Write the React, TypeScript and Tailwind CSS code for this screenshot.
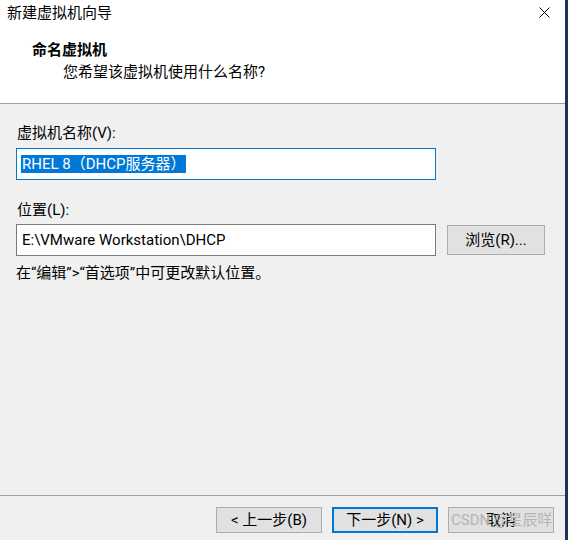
const font = "font-['Roboto','Noto_Sans_CJK_SC',sans-serif]";

const Button = ({ label, primary }: { label: string; primary?: boolean }) => (
  <div
    className={`h-[26px] w-[106px] flex items-center justify-center bg-[#e1e1e1] text-[15px] leading-none text-black ${
      primary ? "border-2 border-[#0078d7]" : "border border-[#adadad]"
    }`}
  >
    {label}
  </div>
);

const App = () => {
  return (
    <div className={`w-[568px] h-[540px] flex bg-[#f0f0f0] text-black ${font}`}>
      <div className="flex-1 flex flex-col">
        {/* title + header */}
        <div className="h-[104px] bg-white border-b border-[#a0a0a0]">
          <div className="h-[28px] flex items-start justify-between pl-[7px] pr-[15px]">
            <span className="text-[15px] leading-[20px] mt-[3px]">新建虚拟机向导</span>
            <svg width="11" height="11" viewBox="0 0 11 11" className="mt-[7px]">
              <path d="M0.5 0.5 L10.5 10.5 M10.5 0.5 L0.5 10.5" stroke="#000" strokeWidth="1" />
            </svg>
          </div>
          <div className="mt-[11px] pl-[32px] text-[15px] leading-[22px] font-bold">命名虚拟机</div>
          <div className="pl-[63px] text-[15px] leading-[22px]">您希望该虚拟机使用什么名称?</div>
        </div>

        {/* body */}
        <div className="flex-1 pl-[16px] pt-[19px]">
          <div className="pl-[1px] text-[15px] leading-[20px]">虚拟机名称(V):</div>
          <div className="mt-[5px] w-[420px] h-[32px] bg-white border border-[#0078d7] flex items-center pl-[4px]">
            <span className="bg-[#0078d7] text-white text-[15px] leading-[18px] px-[1px]">
              RHEL 8（DHCP服务器）
            </span>
          </div>

          <div className="mt-[20px] pl-[1px] text-[15px] leading-[20px]">位置(L):</div>
          <div className="mt-[4px] flex items-center gap-[11px]">
            <div className="w-[420px] h-[32px] bg-white border border-[#7a7a7a] flex items-center pl-[5px] text-[15px]">
              E:\VMware Workstation\DHCP
            </div>
            <div className="w-[98px] h-[30px] bg-[#e1e1e1] border border-[#adadad] flex items-center justify-center text-[15px]">
              浏览(R)...
            </div>
          </div>

          <div className="mt-[7px] text-[15px] leading-[20px]">在“编辑”&gt;“首选项”中可更改默认位置。</div>
        </div>

        {/* footer */}
        <div className="h-[45px] border-t border-[#a0a0a0] flex items-start justify-end gap-[10px] pr-[11px] pt-[11px]">
          <Button label="< 上一步(B)" />
          <Button label="下一步(N) >" primary />
          <div className="relative">
            <Button label="取消" />
            <span className="absolute left-[3px] top-[3px] text-[15px] leading-[20px] text-[#b4b4b4] whitespace-nowrap">
              CSDN @星辰咩
            </span>
          </div>
        </div>
      </div>
      <div className="w-[3px] bg-[#1b3658]" />
    </div>
  );
};

export default App;
